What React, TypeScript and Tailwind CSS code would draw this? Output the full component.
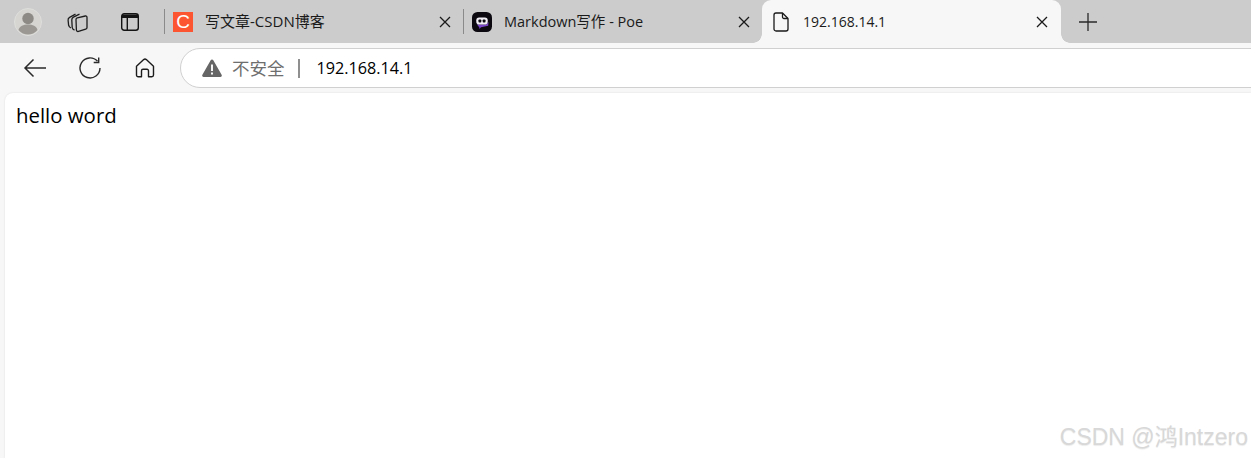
const uiFont = '[font-family:"Open_Sans","Noto_Sans_CJK_SC",sans-serif]';

function CloseIcon() {
  return (
    <svg width="12" height="12" viewBox="0 0 12 12" fill="none" stroke="#1a1a1a" strokeWidth="1.3">
      <path d="M1 1l10 10M11 1L1 11" />
    </svg>
  );
}

function Avatar() {
  return (
    <svg width="28" height="28" viewBox="0 0 28 28" className="shrink-0">
      <circle cx="14" cy="14" r="13.5" fill="#d6d5d1" stroke="#dededc" />
      <circle cx="14" cy="10.5" r="5.7" fill="#8d8a85" />
      <path d="M4.5 22c1-4 5-5.5 9.5-5.5s8.500 1.500 9.500 5.500c-2.500 3-6 4.500-9.500 4.500s-7-1.500-9.500-4.500z" fill="#9b9893" />
    </svg>
  );
}

function CollectionsIcon() {
  return (
    <svg width="22" height="22" viewBox="0 0 22 22" fill="none" stroke="#1c1c1c" strokeWidth="1.3" strokeLinejoin="round" className="shrink-0">
      <path d="M9 8.500c0-.9.500-1.500 1.300-1.700l8-1.800c1-.2 1.700.4 1.700 1.400v10c0 .9-.5 1.500-1.300 1.700l-7.200 2.300c-1.100.3-2-.2-2.100-1.400z" />
      <path d="M7.500 19c-1.300-.3-2.100-1.100-2.300-2.500L4.800 9c-.1-1.400.4-2.300 1.600-2.900l6.100-3" />
      <path d="M3.900 17c-1.300-.5-2-1.400-2.300-2.800L1.100 9.300c-.2-1.400.3-2.400 1.500-3L8.500 3.200" />
    </svg>
  );
}

function VerticalTabsIcon() {
  return (
    <svg width="18" height="18" viewBox="0 0 18 18" fill="none" stroke="#141414" strokeWidth="1.400" className="shrink-0">
      <rect x="0.700" y="0.700" width="16.600" height="16.600" rx="2.500" />
      <path d="M1 1.500h16v3.500H1z" fill="#141414" stroke="none" />
      <path d="M6.300 5v12" />
    </svg>
  );
}

function CsdnIcon() {
  return (
    <div className="flex h-5 w-5 shrink-0 items-center justify-center bg-[#fc5531] pb-px font-['Liberation_Sans'] text-[19px] leading-none text-white">
      C
    </div>
  );
}

function PoeIcon() {
  return (
    <svg width="20" height="20" viewBox="0 0 20 20" className="shrink-0">
      <rect width="20" height="20" rx="5.500" fill="#0c0a10" />
      <path d="M5 12.500h9.500l2-2.500-.3 3.800-7.200 1.500-1.500 1.700-.3-1.700z" fill="#7a45c8" />
      <rect x="4.300" y="5.500" width="11.400" height="7" rx="2.800" fill="#f2f0f6" />
      <rect x="6.500" y="7.500" width="2.800" height="3" rx="0.700" fill="#0c0a10" />
      <rect x="10.700" y="7.500" width="2.800" height="3" rx="0.700" fill="#0c0a10" />
    </svg>
  );
}

function FileIcon() {
  return (
    <svg width="16" height="20" viewBox="0 0 16 20" fill="none" stroke="#1a1a1a" strokeWidth="1.300" strokeLinejoin="round" className="shrink-0">
      <path d="M1 3a2 2 0 0 1 2-2h6.500L15 6.500V17a2 2 0 0 1-2 2H3a2 2 0 0 1-2-2z" />
      <path d="M9.500 1v4a1.500 1.500 0 0 0 1.500 1.500h4" />
    </svg>
  );
}

function BackIcon() {
  return (
    <svg width="24" height="20" viewBox="0 0 24 20" fill="none" stroke="#2a2a2a" strokeWidth="1.500" className="shrink-0">
      <path d="M23 10H2M10.500 1.500L2 10l8.500 8.500" />
    </svg>
  );
}

function ReloadIcon() {
  return (
    <svg width="22" height="22" viewBox="0 0 22 22" fill="none" stroke="#2a2a2a" strokeWidth="1.400" className="shrink-0">
      <path d="M18.500 4.300A10 10 0 1 0 21 11" />
      <path d="M19.700 0.500v5h-5" />
    </svg>
  );
}

function HomeIcon() {
  return (
    <svg width="20" height="20" viewBox="0 0 20 20" fill="none" stroke="#1c1c1c" strokeWidth="1.400" strokeLinejoin="round" className="shrink-0">
      <path d="M1.500 8.300L8.700 1.600a2 2 0 0 1 2.600 0l7.200 6.700V17a1.700 1.700 0 0 1-1.700 1.700h-3.300v-6a1.500 1.500 0 0 0-1.500-1.500H8a1.500 1.500 0 0 0-1.500 1.500v6H3.200A1.700 1.700 0 0 1 1.500 17z" />
    </svg>
  );
}

function WarningIcon() {
  return (
    <svg width="20" height="18" viewBox="0 0 20 18" className="shrink-0">
      <path d="M10 .5a1.500 1.500 0 0 1 1.300.8l8.300 14.400a1.500 1.500 0 0 1-1.300 2.300H1.700a1.500 1.500 0 0 1-1.300-2.300L8.700 1.300A1.500 1.500 0 0 1 10 .5z" fill="#666666" />
      <path d="M9 5.500h2v6.500H9zM9 13.500h2v2H9z" fill="#f7f7f7" />
    </svg>
  );
}

type TabProps = { icon: React.ReactNode; title: string; titleClass: string };

function Tab({ icon, title, titleClass }: TabProps) {
  return (
    <div className="flex h-full w-[299px] shrink-0 items-center">
      <div className="h-[25px] w-px shrink-0 bg-[#8a8a8a]" />
      <div className="ml-2 flex min-w-0 flex-1 items-center">
        {icon}
        <span className={`ml-3 flex-1 truncate text-[#1a1a1a] ${titleClass}`}>{title}</span>
        <div className="mr-[12px]">
          <CloseIcon />
        </div>
      </div>
    </div>
  );
}

export default function App() {
  return (
    <div className={`relative h-[458px] w-[1251px] overflow-hidden bg-[#f7f7f7] ${uiFont}`}>
      {/* tab strip */}
      <div className="flex h-[43px] items-center bg-[#cccccc]">
        <div className="ml-[14px] flex w-[150px] shrink-0 items-center">
          <Avatar />
          <div className="ml-[25px]">
            <CollectionsIcon />
          </div>
          <div className="ml-[32px]">
            <VerticalTabsIcon />
          </div>
        </div>
        <Tab icon={<CsdnIcon />} title="写文章-CSDN博客" titleClass="text-[15px]" />
        <Tab icon={<PoeIcon />} title="Markdown写作 - Poe" titleClass="text-[14.500px]" />
        <div className="relative flex h-full w-[299px] shrink-0 items-center rounded-t-[9px] bg-[#f7f7f7] pl-[11px]">
          <div className="absolute bottom-0 left-[-9px] h-[9px] w-[9px] bg-[radial-gradient(circle_at_0_0,#cccccc_8.500px,#f7f7f7_9px)]" />
          <div className="absolute bottom-0 right-[-9px] h-[9px] w-[9px] bg-[radial-gradient(circle_at_100%_0,#cccccc_8.500px,#f7f7f7_9px)]" />
          <FileIcon />
          <span className="ml-[14px] flex-1 text-[14px] text-[#1a1a1a]">192.168.14.1</span>
          <div className="mr-[13px]">
            <CloseIcon />
          </div>
        </div>
        <svg width="18" height="18" viewBox="0 0 18 18" fill="none" stroke="#2a2a2a" strokeWidth="1.300" className="ml-[18px] shrink-0">
          <path d="M9 0v18M0 9h18" />
        </svg>
      </div>

      {/* toolbar */}
      <div className="flex h-[50px] items-center pb-[5px] pl-[23px] pt-[5px]">
        <BackIcon />
        <div className="ml-[32px] shrink-0">
          <ReloadIcon />
        </div>
        <div className="ml-[34px] shrink-0">
          <HomeIcon />
        </div>
        <div className="ml-[25px] flex h-[40px] w-[1200px] shrink-0 items-center rounded-full border border-[#d0d0d0] bg-white pl-[21px]">
          <WarningIcon />
          <span className="ml-[10px] text-[17.500px] text-[#6e6e6e]">不安全</span>
          <div className="ml-[13px] h-[19px] w-[2px] bg-[#8f8f8f]" />
          <span className="ml-[17px] text-[16.200px] text-black">192.168.14.1</span>
        </div>
      </div>

      {/* page */}
      <div className="ml-[5px] h-[365px] rounded-tl-[8px] bg-white pl-[11px] pt-[9px] shadow-[0_0_2px_rgba(0,0,0,0.12)]">
        <p className="text-[20.400px] leading-[27px] text-black">hello word</p>
      </div>

      {/* watermark */}
      <div className="absolute bottom-[6px] right-[3px] text-[23px] leading-[30px] text-[#d8d8d8] [font-family:'Liberation_Sans','Noto_Sans_CJK_SC',sans-serif] [text-shadow:0_1px_1px_rgba(0,0,0,0.08)]">
        CSDN @鸿Intzero
      </div>
    </div>
  );
}
